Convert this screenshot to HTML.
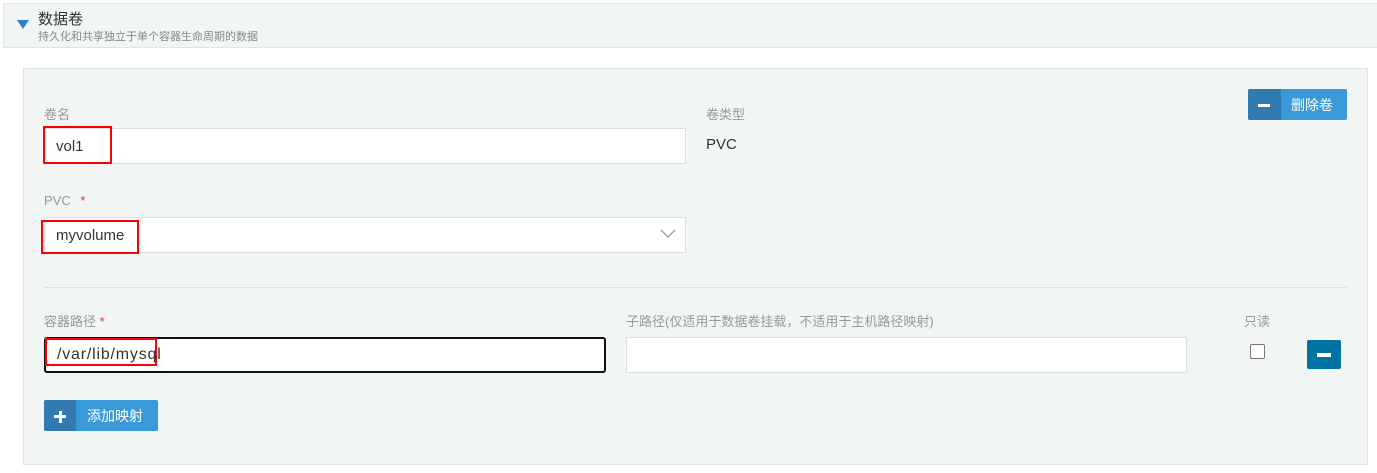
<!DOCTYPE html>
<html><head><meta charset="utf-8"><style>
*{box-sizing:border-box;margin:0;padding:0}
body{width:1377px;height:473px;background:#fff;font-family:"Liberation Sans","Noto Sans CJK SC",sans-serif;position:relative;overflow:hidden}
.a{position:absolute}
.lbl{font-size:13px;color:#999}
.inp{background:#fff;border:1px solid #ddd}
.red{border:2px solid #f00}
</style></head><body>
<div class="a" style="left:3px;top:3px;width:1380px;height:45px;background:#f1f5f5;border:1px solid #e0e6e6"></div>
<div class="a" style="left:17px;top:20px;width:0;height:0;border-left:6px solid transparent;border-right:6px solid transparent;border-top:9px solid #2e7fc0"></div>
<div class="a" style="left:38px;top:8px;font-size:15px;color:#333">数据卷</div>
<div class="a" style="left:38px;top:28px;font-size:11px;color:#888">持久化和共享独立于单个容器生命周期的数据</div>

<div class="a" style="left:23px;top:68px;width:1345px;height:397px;background:#f1f5f4;border:1px solid #dde3e3"></div>

<div class="a lbl" style="left:44px;top:104px">卷名</div>
<div class="a inp" style="left:44px;top:128px;width:642px;height:36px"></div>
<div class="a" style="left:56px;top:138px;font-size:15px;color:#333">vol1</div>
<div class="a red" style="left:43px;top:126px;width:69px;height:38px"></div>

<div class="a lbl" style="left:706px;top:104px">卷类型</div>
<div class="a" style="left:706px;top:136px;font-size:15px;color:#333">PVC</div>

<div class="a" style="left:1248px;top:89px;width:99px;height:31px;background:#3a9ad9;border-radius:2px"></div>
<div class="a" style="left:1248px;top:89px;width:33px;height:31px;background:#337ab0;border-radius:2px 0 0 2px"></div>
<div class="a" style="left:1258px;top:104px;width:12px;height:3px;background:#fff"></div>
<div class="a" style="left:1291px;top:95px;font-size:14px;color:#fff">删除卷</div>

<div class="a lbl" style="left:44px;top:193px">PVC <span style="color:#d33;margin-left:6px">*</span></div>
<div class="a inp" style="left:44px;top:217px;width:642px;height:36px"></div>
<div class="a" style="left:56px;top:227px;font-size:15px;color:#333">myvolume</div>
<svg class="a" style="left:660px;top:229px" width="16" height="10"><path d="M1 1 L8 8 L15 1" stroke="#999" stroke-width="1.3" fill="none"/></svg>
<div class="a red" style="left:41px;top:220px;width:98px;height:34px"></div>

<div class="a" style="left:44px;top:287px;width:1303px;height:1px;background:#dde3e3"></div>

<div class="a lbl" style="left:44px;top:311px">容器路径 <span style="color:#d33">*</span></div>
<div class="a" style="left:44px;top:337px;width:562px;height:36px;background:#fff;border:2px solid #111;border-radius:3px"></div>
<div class="a red" style="left:45px;top:338px;width:112px;height:28px"></div>
<div class="a" style="left:57px;top:346px;font-size:16px;color:#333;letter-spacing:0.8px;z-index:2">/var/lib/mysql</div>

<div class="a lbl" style="left:626px;top:311px">子路径(仅适用于数据卷挂载，不适用于主机路径映射)</div>
<div class="a inp" style="left:626px;top:337px;width:561px;height:36px"></div>

<div class="a lbl" style="left:1244px;top:311px">只读</div>
<div class="a" style="left:1250px;top:344px;width:15px;height:15px;border:1px solid #777;border-radius:2px;background:#fff"></div>
<div class="a" style="left:1307px;top:340px;width:34px;height:29px;background:#0073a5;border-radius:2px"></div>
<div class="a" style="left:1317px;top:353px;width:14px;height:4px;background:#fff"></div>

<div class="a" style="left:44px;top:400px;width:114px;height:31px;background:#3a9ad9;border-radius:2px"></div>
<div class="a" style="left:44px;top:400px;width:32px;height:31px;background:#337ab0;border-radius:2px 0 0 2px"></div>
<div class="a" style="left:54px;top:415px;width:12px;height:3px;background:#fff"></div>
<div class="a" style="left:58.5px;top:410.5px;width:3px;height:12px;background:#fff"></div>
<div class="a" style="left:87px;top:406px;font-size:14px;color:#fff">添加映射</div>
</body></html>
